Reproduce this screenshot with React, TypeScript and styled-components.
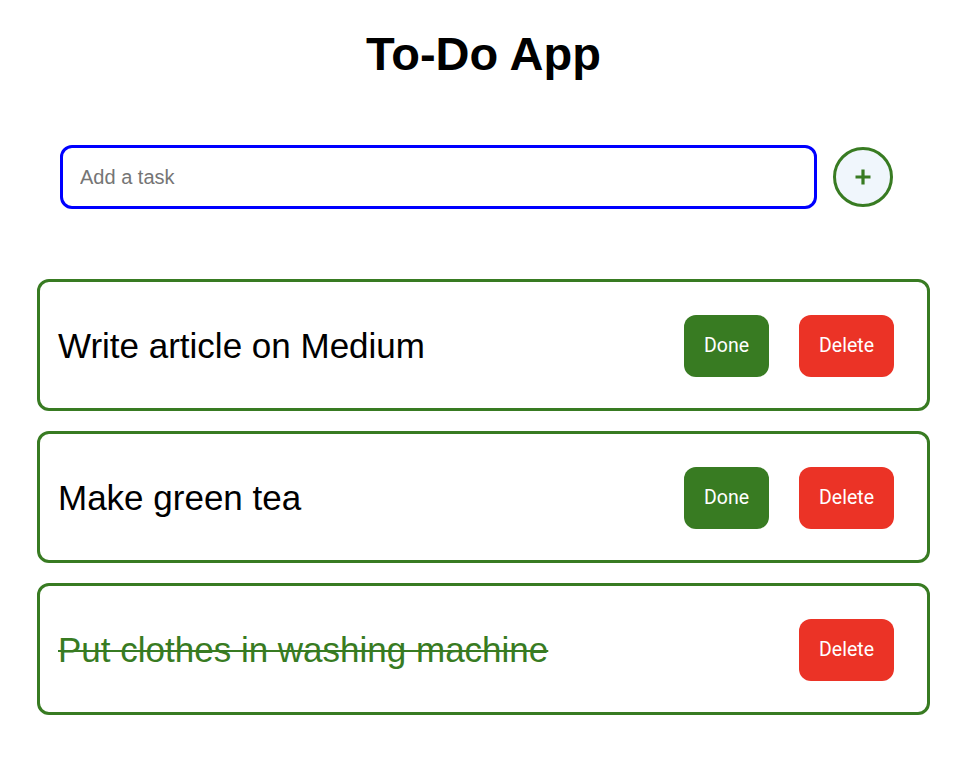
import React from "react";
import styled, { createGlobalStyle } from "styled-components";

const GREEN = "#387b22";
const RED = "#eb3326";

const Global = createGlobalStyle`
  body {
    margin: 0;
    background: #ffffff;
    font-family: "Liberation Sans", Arial, sans-serif;
  }
`;

const Page = styled.div`
  width: 893px;
  margin: 0 auto;
  padding-top: 23px;
`;

const Title = styled.h1`
  margin: 0;
  text-align: center;
  font-size: 47px;
  font-weight: 700;
  line-height: 62px;
  color: #000;
`;

const Form = styled.form`
  display: flex;
  align-items: center;
  gap: 16px;
  margin-top: 60px;
  padding: 0 37px 0 23px;
`;

const Input = styled.input`
  flex: 1;
  min-width: 0;
  height: 64px;
  box-sizing: border-box;
  border: 3px solid #0000ff;
  border-radius: 12px;
  padding: 0 17px;
  font-family: "Liberation Sans", Arial, sans-serif;
  font-size: 20px;
  outline: none;
  &::placeholder {
    color: #757575;
  }
`;

const AddButton = styled.button`
  flex-shrink: 0;
  width: 60px;
  height: 60px;
  box-sizing: border-box;
  border-radius: 50%;
  border: 3px solid ${GREEN};
  background: #f0f6fc;
  color: ${GREEN};
  display: flex;
  align-items: center;
  justify-content: center;
  padding: 0;
  cursor: pointer;
`;

const List = styled.div`
  display: flex;
  flex-direction: column;
  gap: 20px;
  margin-top: 70px;
`;

const Card = styled.div`
  display: flex;
  align-items: center;
  height: 132px;
  box-sizing: border-box;
  border: 3px solid ${GREEN};
  border-radius: 12px;
  padding: 1px 33px 0 18px;
`;

const TaskText = styled.span<{ $done?: boolean }>`
  flex: 1;
  font-size: 35px;
  color: ${(p) => (p.$done ? GREEN : "#000")};
  text-decoration: ${(p) => (p.$done ? "line-through" : "none")};
  text-decoration-thickness: 2px;
`;

const Actions = styled.div`
  display: flex;
  gap: 30px;
`;

const ActionButton = styled.button<{ $variant: "done" | "delete" }>`
  height: 62px;
  padding: 0 20px;
  border: none;
  border-radius: 12px;
  background: ${(p) => (p.$variant === "done" ? GREEN : RED)};
  color: #fff;
  font-family: Roboto, "Liberation Sans", sans-serif;
  font-size: 19.5px;
  cursor: pointer;
`;

const tasks = [
  { text: "Write article on Medium", done: false },
  { text: "Make green tea", done: false },
  { text: "Put clothes in washing machine", done: true },
];

export default function App() {
  return (
    <>
      <Global />
      <Page>
        <Title>To-Do App</Title>
        <Form onSubmit={(e) => e.preventDefault()}>
          <Input placeholder="Add a task" />
          <AddButton type="submit" aria-label="Add">
            <svg width="18" height="18" viewBox="0 0 18 18">
              <path d="M9 1.5v15M1.5 9h15" stroke={GREEN} strokeWidth="3.2" />
            </svg>
          </AddButton>
        </Form>
        <List>
          {tasks.map((t) => (
            <Card key={t.text}>
              <TaskText $done={t.done}>{t.text}</TaskText>
              <Actions>
                {!t.done && <ActionButton $variant="done">Done</ActionButton>}
                <ActionButton $variant="delete">Delete</ActionButton>
              </Actions>
            </Card>
          ))}
        </List>
      </Page>
    </>
  );
}
